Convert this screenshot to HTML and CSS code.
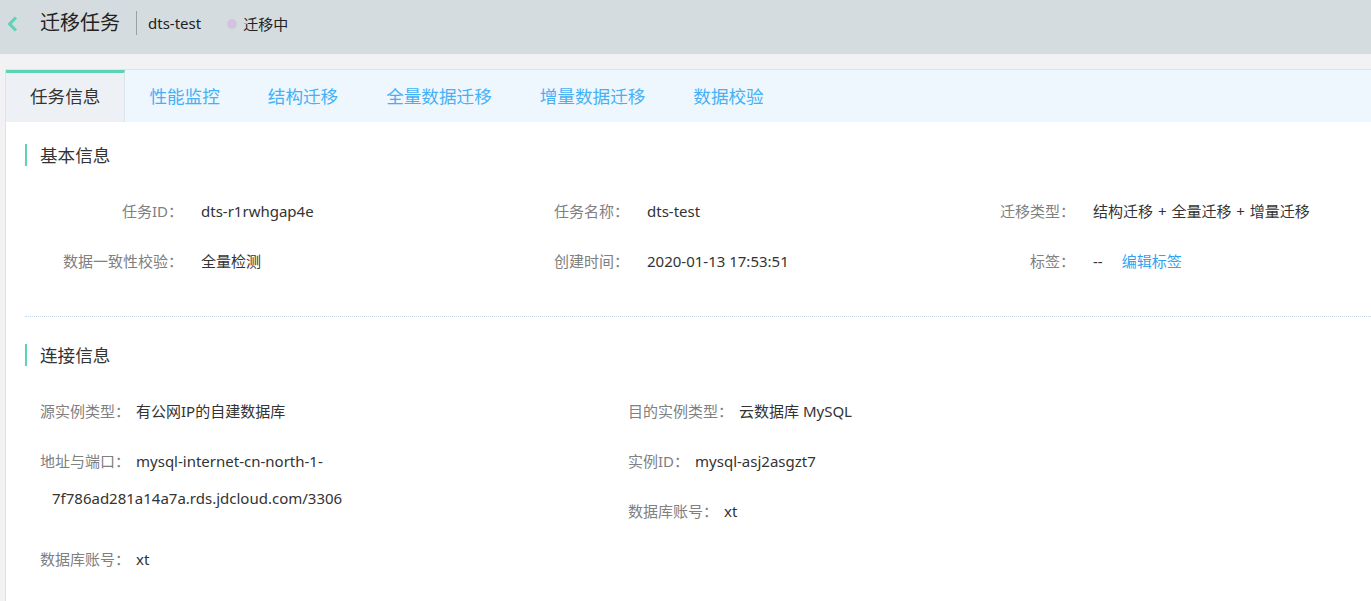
FILE: index.html
```html
<!DOCTYPE html>
<html lang="zh-CN">
<head>
<meta charset="utf-8">
<title>迁移任务</title>
<link rel="stylesheet" href="styles.css">
</head>
<body>
<header class="topbar">
  <a class="back" href="#" aria-label="返回">
    <svg width="11" height="16" viewBox="0 0 11 16"><path d="M9 1.5 L2.6 8 L9 14.5" fill="none" stroke="#5fd3b3" stroke-width="3.2"/></svg>
  </a>
  <h1 class="title">迁移任务</h1>
  <span class="divider"></span>
  <span class="task-name">dts-test</span>
  <span class="status"><i class="dot"></i>迁移中</span>
</header>

<main class="card">
  <nav class="tabs">
    <a class="tab active" href="#">任务信息</a>
    <a class="tab" href="#">性能监控</a>
    <a class="tab" href="#">结构迁移</a>
    <a class="tab" href="#">全量数据迁移</a>
    <a class="tab" href="#">增量数据迁移</a>
    <a class="tab" href="#">数据校验</a>
  </nav>

  <section class="section basic">
    <h2 class="sec-title">基本信息</h2>
    <div class="info-grid">
      <div class="info-item"><span class="label">任务ID：</span><span class="value">dts-r1rwhgap4e</span></div>
      <div class="info-item"><span class="label">任务名称：</span><span class="value">dts-test</span></div>
      <div class="info-item"><span class="label">迁移类型：</span><span class="value wide">结构迁移 + 全量迁移 + 增量迁移</span></div>
      <div class="info-item"><span class="label">数据一致性校验：</span><span class="value">全量检测</span></div>
      <div class="info-item"><span class="label">创建时间：</span><span class="value">2020-01-13 17:53:51</span></div>
      <div class="info-item"><span class="label">标签：</span><span class="value">--<a class="link" href="#">编辑标签</a></span></div>
    </div>
  </section>

  <section class="section conn">
    <h2 class="sec-title">连接信息</h2>
    <div class="conn-grid">
      <div class="conn-col">
        <p class="conn-item"><span class="clabel">源实例类型：</span><span class="value">有公网IP的自建数据库</span></p>
        <p class="conn-item wrap"><span class="clabel">地址与端口：</span><span class="value">mysql-internet-cn-north-1-</span><span class="value">7f786ad281a14a7a.rds.jdcloud.com/3306</span></p>
        <p class="conn-item"><span class="clabel">数据库账号：</span><span class="value">xt</span></p>
      </div>
      <div class="conn-col">
        <p class="conn-item"><span class="clabel">目的实例类型：</span><span class="value">云数据库 MySQL</span></p>
        <p class="conn-item"><span class="clabel">实例ID：</span><span class="value">mysql-asj2asgzt7</span></p>
        <p class="conn-item"><span class="clabel">数据库账号：</span><span class="value">xt</span></p>
      </div>
    </div>
  </section>
</main>
</body>
</html>
```

FILE: styles.css
```css
* { box-sizing: border-box; }
html, body { margin: 0; padding: 0; }
body {
  background: #f2f2f4;
  font-family: "Noto Sans", "Noto Sans CJK SC", sans-serif;
  color: #333;
  height: 100vh;
  overflow: hidden;
  display: flex;
  flex-direction: column;
}

.topbar {
  flex: none;
  height: 54px;
  background: #d5dcdf;
  display: flex;
  align-items: center;
  padding: 0 0 8px 7px;
}
.back { display: flex; align-items: center; width: 11px; height: 16px; margin-top: 1px; }
.back svg { display: block; }
.title {
  margin: 0 0 0 22px;
  font-size: 20px;
  font-weight: normal;
  color: #222;
  line-height: 24px;
}
.divider {
  width: 1px;
  height: 24px;
  background: #9aa1a5;
  margin-left: 16px;
  margin-right: 11px;
}
.task-name { font-size: 15px; color: #222; }
.status {
  display: flex;
  align-items: center;
  margin-left: 26px;
  font-size: 15px;
  color: #222;
}
.dot {
  width: 10px;
  height: 10px;
  border-radius: 50%;
  background: #d2c3de;
  margin-right: 6px;
  margin-top: 1px;
}

.card {
  flex: 1;
  margin: 15px 0 0 5px;
  background: #fff;
  border-left: 1px solid #dde3ea;
  border-top: 1px solid #dde3ea;
  min-height: 0;
}

.tabs {
  display: flex;
  height: 52px;
  background: #eef6fe;
}
.tab {
  display: flex;
  align-items: center;
  padding: 0 24px 4px;
  font-size: 17.6px;
  color: #45b1f4;
  text-decoration: none;
  border-top: 3px solid transparent;
}
.tab.active {
  background: #edf1f5;
  color: #333;
  border-top-color: #5dd3b5;
  border-right: 1px solid #dde3ea;
}

.section { padding-left: 19px; }
.sec-title {
  margin: 22px 0 0;
  height: 22px;
  line-height: 22px;
  border-left: 2px solid #5dd3b5;
  padding-left: 13px;
  font-size: 17.6px;
  font-weight: normal;
  color: #333;
}

.basic { padding-bottom: 30px; }
.info-grid {
  display: grid;
  grid-template-columns: repeat(3, 446px);
  margin-top: 20px;
}
.info-item {
  display: flex;
  height: 50px;
  line-height: 50px;
  font-size: 15px;
}
.label {
  width: 158px;
  text-align: right;
  color: #808080;
  margin-right: 18px;
  flex: none;
}
.value { color: #333; }
.value.wide { word-spacing: 1px; }
.link {
  color: #2fa3ef;
  text-decoration: none;
  margin-left: 19px;
}

.conn { border-top: 1px dotted #c6d5e3; margin-left: 19px; padding-left: 0; }
.conn .sec-title { margin-top: 27px; }
.conn-grid {
  display: grid;
  grid-template-columns: 588px 1fr;
  margin-top: 27px;
  padding-left: 15px;
}
.conn-col { padding-left: 12px; }
.conn-item {
  margin: 0 0 13px;
  text-indent: -12px;
  line-height: 37px;
  font-size: 15px;
}
.conn-col:first-child .conn-item { width: 520px; }
.conn-item.wrap { margin-bottom: 24px; }
.clabel { color: #808080; margin-right: 6px; }
```
